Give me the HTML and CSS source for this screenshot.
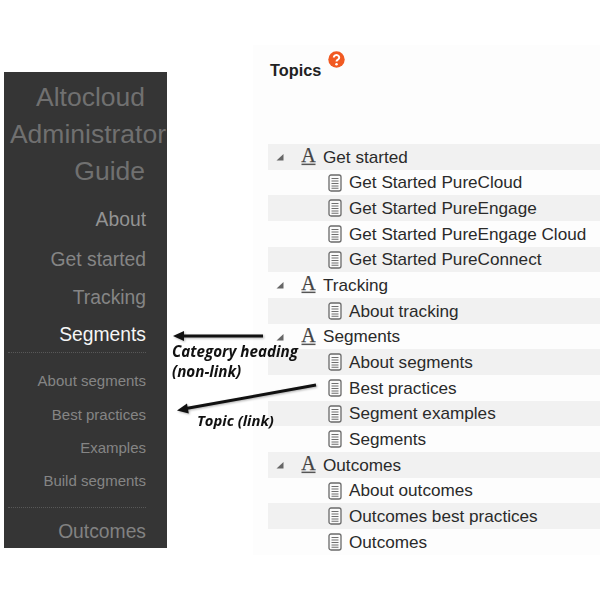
FILE: index.html
```html
<!DOCTYPE html>
<html lang="en">
<head>
<meta charset="utf-8">
<title>Altocloud Administrator Guide topics</title>
<link rel="stylesheet" href="styles.css">
</head>
<body>
<svg class="defs" width="0" height="0" aria-hidden="true">
  <symbol id="page" viewBox="0 0 14 18">
    <rect x="1" y="1" width="12" height="16" rx="2" fill="#fafafa" stroke="#6a6a6a" stroke-width="1.3"/>
    <path d="M3.500 4.500h7M3.500 7h7M3.500 9.500h7M3.500 12h7M3.500 14.300h7" stroke="#6f6f6f" stroke-width="1.1" fill="none"/>
  </symbol>
  <symbol id="cat" viewBox="0 0 15 18">
    <text x="7.5" y="13.8" text-anchor="middle" class="cat-letter">A</text>
    <rect x="0.5" y="15.6" width="14" height="1.5" fill="#555"/>
  </symbol>
  <symbol id="tri" viewBox="0 0 8 8">
    <path d="M7.500 1V7.500H0.500Z" fill="#666"/>
  </symbol>
</svg>
<main class="page">
  <nav class="side">
    <h1 class="side-title">Altocloud<br><span class="side-over">Administrator</span><br>Guide</h1>
    <a class="side-link first">About</a>
    <a class="side-link second">Get started</a>
    <a class="side-link third">Tracking</a>
    <a class="side-link active">Segments</a>
    <div class="side-subs">
      <a class="side-sub">About segments</a>
      <a class="side-sub">Best practices</a>
      <a class="side-sub">Examples</a>
      <a class="side-sub">Build segments</a>
    </div>
    <a class="side-link last">Outcomes</a>
  </nav>
  <section class="panel">
    <header class="panel-head">
      <h2 class="panel-title">Topics</h2>
      <svg class="help" width="17" height="17" viewBox="0 0 17 17" aria-hidden="true">
        <circle cx="8.5" cy="8.5" r="8.2" fill="#f15a22"/>
        <path d="M5.800 6.500a2.700 2.400 0 1 1 4.200 2c-1 .7-1.500 1-1.500 2" fill="none" stroke="#fff" stroke-width="2"/>
        <circle cx="8.5" cy="13.2" r="1.25" fill="#fff"/>
      </svg>
    </header>
    <ul class="tree">
      <li class="row cat"><svg class="tri"><use href="#tri"/></svg><svg class="cat-i"><use href="#cat"/></svg><span>Get started</span></li>
      <li class="row topic"><svg class="page-i"><use href="#page"/></svg><span>Get Started PureCloud</span></li>
      <li class="row topic"><svg class="page-i"><use href="#page"/></svg><span>Get Started PureEngage</span></li>
      <li class="row topic"><svg class="page-i"><use href="#page"/></svg><span>Get Started PureEngage Cloud</span></li>
      <li class="row topic"><svg class="page-i"><use href="#page"/></svg><span>Get Started PureConnect</span></li>
      <li class="row cat"><svg class="tri"><use href="#tri"/></svg><svg class="cat-i"><use href="#cat"/></svg><span>Tracking</span></li>
      <li class="row topic"><svg class="page-i"><use href="#page"/></svg><span>About tracking</span></li>
      <li class="row cat"><svg class="tri"><use href="#tri"/></svg><svg class="cat-i"><use href="#cat"/></svg><span>Segments</span></li>
      <li class="row topic"><svg class="page-i"><use href="#page"/></svg><span>About segments</span></li>
      <li class="row topic"><svg class="page-i"><use href="#page"/></svg><span>Best practices</span></li>
      <li class="row topic"><svg class="page-i"><use href="#page"/></svg><span>Segment examples</span></li>
      <li class="row topic"><svg class="page-i"><use href="#page"/></svg><span>Segments</span></li>
      <li class="row cat"><svg class="tri"><use href="#tri"/></svg><svg class="cat-i"><use href="#cat"/></svg><span>Outcomes</span></li>
      <li class="row topic"><svg class="page-i"><use href="#page"/></svg><span>About outcomes</span></li>
      <li class="row topic"><svg class="page-i"><use href="#page"/></svg><span>Outcomes best practices</span></li>
      <li class="row topic"><svg class="page-i"><use href="#page"/></svg><span>Outcomes</span></li>
    </ul>
  </section>
  <svg class="arrows" width="600" height="600" viewBox="0 0 600 600" aria-hidden="true">
    <path d="M263 336H182" stroke="#111" stroke-width="3" fill="none"/>
    <path d="M173 336l11-5v10z" fill="#111"/>
    <path d="M316 385L186 408.500" stroke="#111" stroke-width="3" fill="none"/>
    <path d="M177 410.500l10-7 1.800 10z" fill="#111"/>
  </svg>
  <p class="note note-cat">Category heading<br>(non-link)</p>
  <p class="note note-topic">Topic (link)</p>
</main>
</body>
</html>
```
FILE: styles.css
```css
* { box-sizing: border-box; }
html, body { margin: 0; padding: 0; background: #fff; }
body { width: 600px; height: 600px; overflow: hidden; font-family: "Liberation Sans", Arial, sans-serif; }
.defs { position: absolute; }
.page { position: relative; display: flex; align-items: flex-start; width: 600px; height: 600px; filter: blur(0.35px); }

.side { width: 163px; height: 476px; margin: 72px 0 0 4px; background: #353535; overflow: hidden; display: flex; flex-direction: column; align-items: stretch; padding: 7px 21px 0 4px; text-align: right; flex: none; }
.side-title { margin: 0 1px 0 0; font-size: 26.5px; line-height: 36.8px; font-weight: 400; color: #707070; white-space: nowrap; }
.side-over { margin-right: -21px; display: inline-block; }
.side-link { font-size: 19.3px; line-height: 24px; color: #858585; display: block; }
.side-link.first { margin-top: 19px; color: #939393; }
.side-link.second { margin-top: 16px; }
.side-link.third { margin-top: 14px; }
.side-link.active { color: #f6f6f6; margin-top: 13px; padding-bottom: 5px; border-bottom: 1px dotted #585858; }
.side-subs { display: flex; flex-direction: column; gap: 13.3px; padding: 18px 0 15.6px; border-bottom: 1px dotted #585858; }
.side-sub { font-size: 15px; line-height: 20px; color: #858585; display: block; }
.side-link.last { margin-top: 12.5px; color: #828282; }

.panel { width: 347px; height: 510px; margin: 45px 0 0 86px; padding: 0 0 0 15px; background: #fdfdfd; flex: none; }
.panel-head { display: flex; align-items: flex-start; gap: 7px; height: 99px; padding-top: 6px; }
.panel-title { margin: 8px 0 0 2px; font-size: 16.3px; line-height: 22px; font-weight: 700; color: #222; }
.tree { list-style: none; margin: 0; padding: 0; }
.row { display: flex; align-items: center; height: 25.68px; font-size: 17.15px; color: #2a2a2a; white-space: nowrap; }
.row span { position: relative; top: 0.2px; }
.row:nth-child(odd) { background: #f1f1f1; }
.topic { padding-left: 60px; }
.cat { padding-left: 8px; }
.tri { width: 8px; height: 8px; flex: none; }
.cat-i { width: 15px; height: 18px; margin-left: 17px; margin-right: 7px; flex: none; }
.cat-letter { font-family: "Liberation Serif", serif; font-size: 20px; fill: #444; stroke: #444; stroke-width: 0.25px; font-weight: 400; }
.page-i { width: 14px; height: 18px; margin-right: 7px; flex: none; }

.arrows { position: absolute; left: 0; top: 0; pointer-events: none; filter: drop-shadow(1px 1.5px 1px rgba(0, 0, 0, 0.3)); }
.note { position: absolute; margin: 0; font-family: "Open Sans", sans-serif; font-weight: 700; font-style: italic; font-size: 15.2px; line-height: 20px; color: #111; white-space: nowrap; }
.note-cat { left: 172px; top: 341px; }
.note-topic { left: 197px; top: 410px; font-size: 14.8px; }
```
